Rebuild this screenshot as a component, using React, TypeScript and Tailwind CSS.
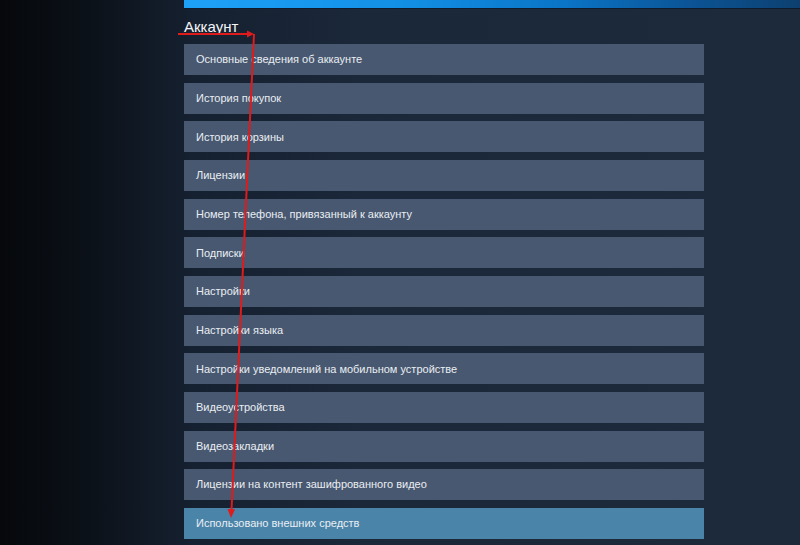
import React from 'react';

const items = [
  'Основные сведения об аккаунте',
  'История покупок',
  'История корзины',
  'Лицензии',
  'Номер телефона, привязанный к аккаунту',
  'Подписки',
  'Настройки',
  'Настройки языка',
  'Настройки уведомлений на мобильном устройстве',
  'Видеоустройства',
  'Видеозакладки',
  'Лицензии на контент зашифрованного видео',
  'Использовано внешних средств',
];

export default function App() {
  return (
    <div className="relative w-[800px] h-[545px] overflow-hidden bg-[linear-gradient(90deg,#06080b_0%,#0c121a_12%,#152030_24%,#1b2839_45%,#1c2a3c_100%)] font-['Liberation_Sans',Arial,sans-serif]">
      <div className="ml-[184px]">
        <div className="h-[9px] bg-[linear-gradient(90deg,#1ea2f8_0%,#1290e6_35%,#0a74c6_62%,#0b5496_82%,#0d4070_100%)] border-b border-[#0f1a2a]" />
        <h2 className="mt-[8px] h-[24px] text-[15px] leading-[20px] text-[#f2f4f7]">Аккаунт</h2>
        <div className="mt-[3px] w-[520px] flex flex-col gap-[7.67px]">
          {items.map((t, i) => (
            <div
              key={t}
              className={
                i === items.length - 1
                  ? 'h-[31px] flex items-center pl-[12px] text-[11px] text-[#eaeef3] bg-[#4a84a9]'
                  : 'h-[31px] flex items-center pl-[12px] text-[11px] text-[#eaeef3] bg-[#485870]'
              }
            >
              {t}
            </div>
          ))}
        </div>
      </div>

      {/* red annotation arrows */}
      <svg className="absolute left-0 top-0 pointer-events-none" width="800" height="545">
        <line x1="178" y1="34" x2="250" y2="34" stroke="#e01b1b" strokeWidth="2" />
        <polygon points="254,34 247,30.5 247,37.5" fill="#e01b1b" />
        <line x1="254" y1="34" x2="231.5" y2="510" stroke="#e01b1b" strokeWidth="2" />
        <polygon points="231,518 227.5,509 235,509.3" fill="#e01b1b" />
      </svg>
    </div>
  );
}
